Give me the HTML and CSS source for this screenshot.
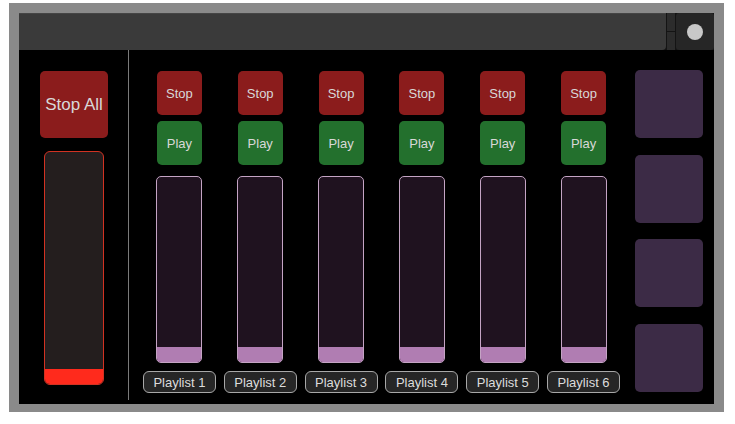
FILE: index.html
```html
<!DOCTYPE html>
<html>
<head>
<meta charset="utf-8">
<link rel="stylesheet" href="styles.css">
</head>
<body>
<div class="frame">
  <div class="panel">
    <div class="topbar">
      <div class="bar-main"></div>
      <div class="bar-seg"><div class="half"></div><div class="half"></div></div>
      <div class="bar-btn"><div class="dot"></div></div>
    </div>
    <div class="main">
      <div class="master">
        <div class="btn stop stop-all">Stop All</div>
        <div class="master-fader"><div class="master-fill"></div></div>
      </div>
      <div class="divider"></div>
      <div class="channels">
        <div class="channel">
          <div class="btn stop small">Stop</div>
          <div class="btn play small">Play</div>
          <div class="fader"><div class="fill"></div></div>
          <div class="label">Playlist 1</div>
        </div>
        <div class="channel">
          <div class="btn stop small">Stop</div>
          <div class="btn play small">Play</div>
          <div class="fader"><div class="fill"></div></div>
          <div class="label">Playlist 2</div>
        </div>
        <div class="channel">
          <div class="btn stop small">Stop</div>
          <div class="btn play small">Play</div>
          <div class="fader"><div class="fill"></div></div>
          <div class="label">Playlist 3</div>
        </div>
        <div class="channel">
          <div class="btn stop small">Stop</div>
          <div class="btn play small">Play</div>
          <div class="fader"><div class="fill"></div></div>
          <div class="label">Playlist 4</div>
        </div>
        <div class="channel">
          <div class="btn stop small">Stop</div>
          <div class="btn play small">Play</div>
          <div class="fader"><div class="fill"></div></div>
          <div class="label">Playlist 5</div>
        </div>
        <div class="channel">
          <div class="btn stop small">Stop</div>
          <div class="btn play small">Play</div>
          <div class="fader"><div class="fill"></div></div>
          <div class="label">Playlist 6</div>
        </div>
      </div>
      <div class="pads">
        <div class="pad"></div>
        <div class="pad"></div>
        <div class="pad"></div>
        <div class="pad"></div>
      </div>
    </div>
  </div>
</div>
</body>
</html>
```
FILE: styles.css
```css
* { box-sizing: border-box; }
html, body { margin: 0; padding: 0; background: #ffffff; }
body {
  font-family: "Liberation Sans", Arial, sans-serif;
  width: 735px;
  height: 424px;
  overflow: hidden;
}
.frame {
  margin: 3px 0 0 9px;
  width: 715px;
  height: 409px;
  background: #8a8a8a;
  padding: 10px 0 0 10px;
}
.panel {
  width: 695px;
  height: 391px;
  background: #000000;
  display: flex;
  flex-direction: column;
}
.topbar {
  height: 37px;
  display: flex;
  background: #141414;
}
.bar-main {
  flex: 1;
  background: #3a3a3a;
  border-bottom-right-radius: 4px;
  border-top: 1px solid #454545;
}
.bar-seg {
  width: 8px;
  margin-left: 1px;
  display: flex;
  flex-direction: column;
  gap: 1px;
}
.bar-seg .half { flex: 1; background: #2c2c2c; }
.bar-btn {
  width: 38px;
  margin-left: 1px;
  background: #262626;
  border-radius: 3px;
  display: flex;
  align-items: center;
  justify-content: center;
}
.dot {
  width: 16px;
  height: 16px;
  border-radius: 50%;
  background: #c8c8c8;
}
.main {
  height: 354px;
  display: flex;
}
.master {
  width: 109px;
  display: flex;
  flex-direction: column;
  align-items: center;
  padding-top: 21px;
  padding-left: 1px;
}
.btn {
  display: flex;
  align-items: center;
  justify-content: center;
  color: #d8d8d8;
  border-radius: 5px;
}
.stop { background: #8b1c1c; }
.play { background: #23702d; }
.stop-all {
  width: 68px;
  height: 67px;
  font-size: 17px;
}
.master-fader {
  margin-top: 13px;
  width: 60px;
  height: 234px;
  border: 1px solid #d23222;
  border-radius: 6px;
  background: #241e1e;
  display: flex;
  flex-direction: column;
  justify-content: flex-end;
  overflow: hidden;
}
.master-fill {
  height: 15px;
  background: #ff2a1c;
}
.divider {
  width: 1px;
  height: 350px;
  background: #7a7a7a;
}
.channels {
  margin-left: 10px;
  width: 485px;
  display: grid;
  grid-template-columns: repeat(6, 1fr);
}
.channel {
  display: flex;
  flex-direction: column;
  align-items: center;
  padding-top: 21px;
}
.small {
  width: 45px;
  height: 44px;
  font-size: 13px;
}
.small.play { margin-top: 6px; }
.fader {
  margin-top: 11px;
  width: 46px;
  height: 187px;
  border: 1px solid #c4a4c4;
  border-radius: 5px;
  background: #1f121f;
  display: flex;
  flex-direction: column;
  justify-content: flex-end;
  overflow: hidden;
}
.fill {
  height: 15px;
  background: #b07db2;
}
.label {
  margin-top: 8px;
  width: 73px;
  height: 22px;
  border: 1.5px solid #a8a8a8;
  border-radius: 6px;
  background: #262626;
  color: #dcdcdc;
  font-size: 13px;
  display: flex;
  align-items: center;
  justify-content: center;
}
.pads {
  margin-left: 11px;
  width: 68px;
  padding-top: 20px;
  display: flex;
  flex-direction: column;
  gap: 16.5px;
}
.pad {
  height: 68px;
  background: #3c2b46;
  border-radius: 5px;
}
```
